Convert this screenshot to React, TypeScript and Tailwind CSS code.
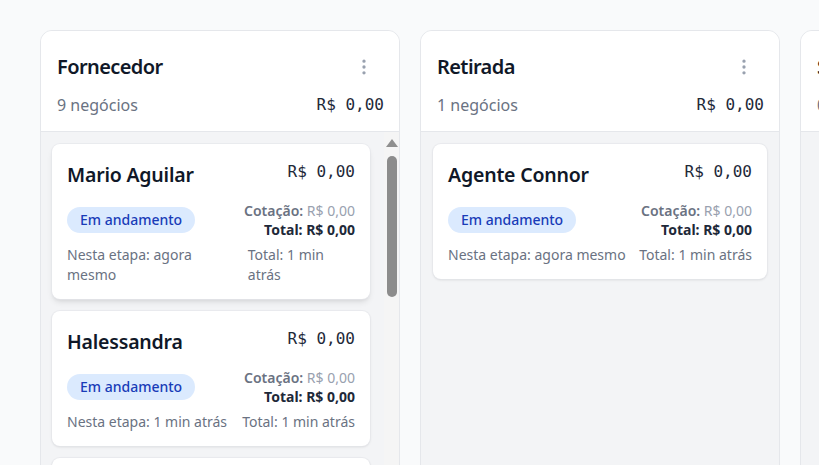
import React from "react";
import { EllipsisVertical } from "lucide-react";

type Deal = { name: string; stage: string; total: string };

const col1: Deal[] = [
  { name: "Mario Aguilar", stage: "agora mesmo", total: "1 min atrás" },
  { name: "Halessandra", stage: "1 min atrás", total: "1 min atrás" },
  { name: "Ricardo Souza", stage: "1 min atrás", total: "1 min atrás" },
  { name: "Juliana Lima", stage: "2 min atrás", total: "2 min atrás" },
  { name: "Pedro Santos", stage: "2 min atrás", total: "2 min atrás" },
  { name: "Camila Rocha", stage: "3 min atrás", total: "3 min atrás" },
  { name: "Bruno Costa", stage: "3 min atrás", total: "3 min atrás" },
  { name: "Fernanda Alves", stage: "4 min atrás", total: "4 min atrás" },
  { name: "Lucas Pereira", stage: "5 min atrás", total: "5 min atrás" },
];

const col2: Deal[] = [{ name: "Agente Connor", stage: "agora mesmo", total: "1 min atrás" }];

const mono = "font-['DejaVu_Sans_Mono','Liberation_Mono',monospace]";

function Card({ d, hovered }: { d: Deal; hovered?: boolean }) {
  return (
    <div
      className={
        "bg-white rounded-lg ring-1 ring-gray-200/70 px-[15px] pt-[17px] pb-[14px] " +
        (hovered ? "shadow-md" : "shadow-sm")
      }
    >
      <div className="flex items-start justify-between gap-3">
        <div className="text-[19.5px] leading-7 font-semibold text-gray-900 tracking-[-0.01em]">{d.name}</div>
        <div className={mono + " text-base leading-6 text-gray-800 whitespace-nowrap -mt-[1px]"}>R$ 0,00</div>
      </div>
      <div className="mt-3 flex items-center justify-between">
        <span className="inline-flex items-center h-[26px] px-[13px] rounded-full bg-blue-100 text-blue-800 text-sm font-medium">
          Em andamento
        </span>
        <div className="text-right text-sm leading-[19px]">
          <div>
            <span className="font-semibold text-gray-500">Cotação:</span>{" "}
            <span className="text-gray-400">R$ 0,00</span>
          </div>
          <div className="font-bold text-gray-800">Total: R$ 0,00</div>
        </div>
      </div>
      <div className="mt-[6px] flex justify-between gap-3 text-sm leading-5 text-gray-500">
        <div>Nesta etapa: {d.stage}</div>
        <div className="text-left">Total: {d.total}</div>
      </div>
    </div>
  );
}

function Scrollbar() {
  return (
    <div className="absolute right-0 top-0 bottom-0 w-[15px] bg-[#f5f5f5] flex flex-col items-center">
      <div className="mt-[7px] w-0 h-0 border-l-[6px] border-r-[6px] border-b-[8px] border-l-transparent border-r-transparent border-b-[#8f8f8f]" />
      <div className="mt-[9px] w-[10px] h-[141px] rounded-full bg-[#8c8c8c]" />
    </div>
  );
}

function Column({
  title,
  count,
  deals,
  scroll,
}: {
  title: string;
  count: string;
  deals: Deal[];
  scroll?: boolean;
}) {
  return (
    <div className="w-[360px] shrink-0 rounded-xl border border-gray-200 bg-gray-100 overflow-hidden flex flex-col">
      <div className="bg-white pl-4 pr-[15px] pt-4 pb-[14px] border-b border-gray-200">
        <div className="flex items-center justify-between h-10">
          <div className="text-xl font-semibold text-gray-900 tracking-[-0.03em]">{title}</div>
          <button className="w-10 h-10 flex items-center justify-center text-gray-400">
            <EllipsisVertical size={20} strokeWidth={2} />
          </button>
        </div>
        <div className="mt-1.5 flex items-center justify-between">
          <div className="text-base leading-6 text-gray-500">{count}</div>
          <div className={mono + " text-base leading-6 text-gray-800"}>R$ 0,00</div>
        </div>
      </div>
      <div className="relative h-[450px] overflow-hidden">
        <div className={"h-full pt-3 flex flex-col gap-3 " + (scroll ? "pl-[11px] pr-[29px]" : "px-3")}>
          {deals.map((d, i) => (
            <Card key={i} d={d} hovered={scroll && i === 0} />
          ))}
        </div>
        {scroll && <Scrollbar />}
      </div>
    </div>
  );
}

export default function App() {
  return (
    <div className="w-screen h-[465px] overflow-hidden bg-gray-50 font-['Noto_Sans',sans-serif]">
      <div className="flex gap-5 pl-10 pt-[30px]">
        <Column title="Fornecedor" count="9 negócios" deals={col1} scroll />
        <Column title="Retirada" count="1 negócios" deals={col2} />
        <Column title="Separação" count="0 negócios" deals={[]} />
      </div>
    </div>
  );
}
